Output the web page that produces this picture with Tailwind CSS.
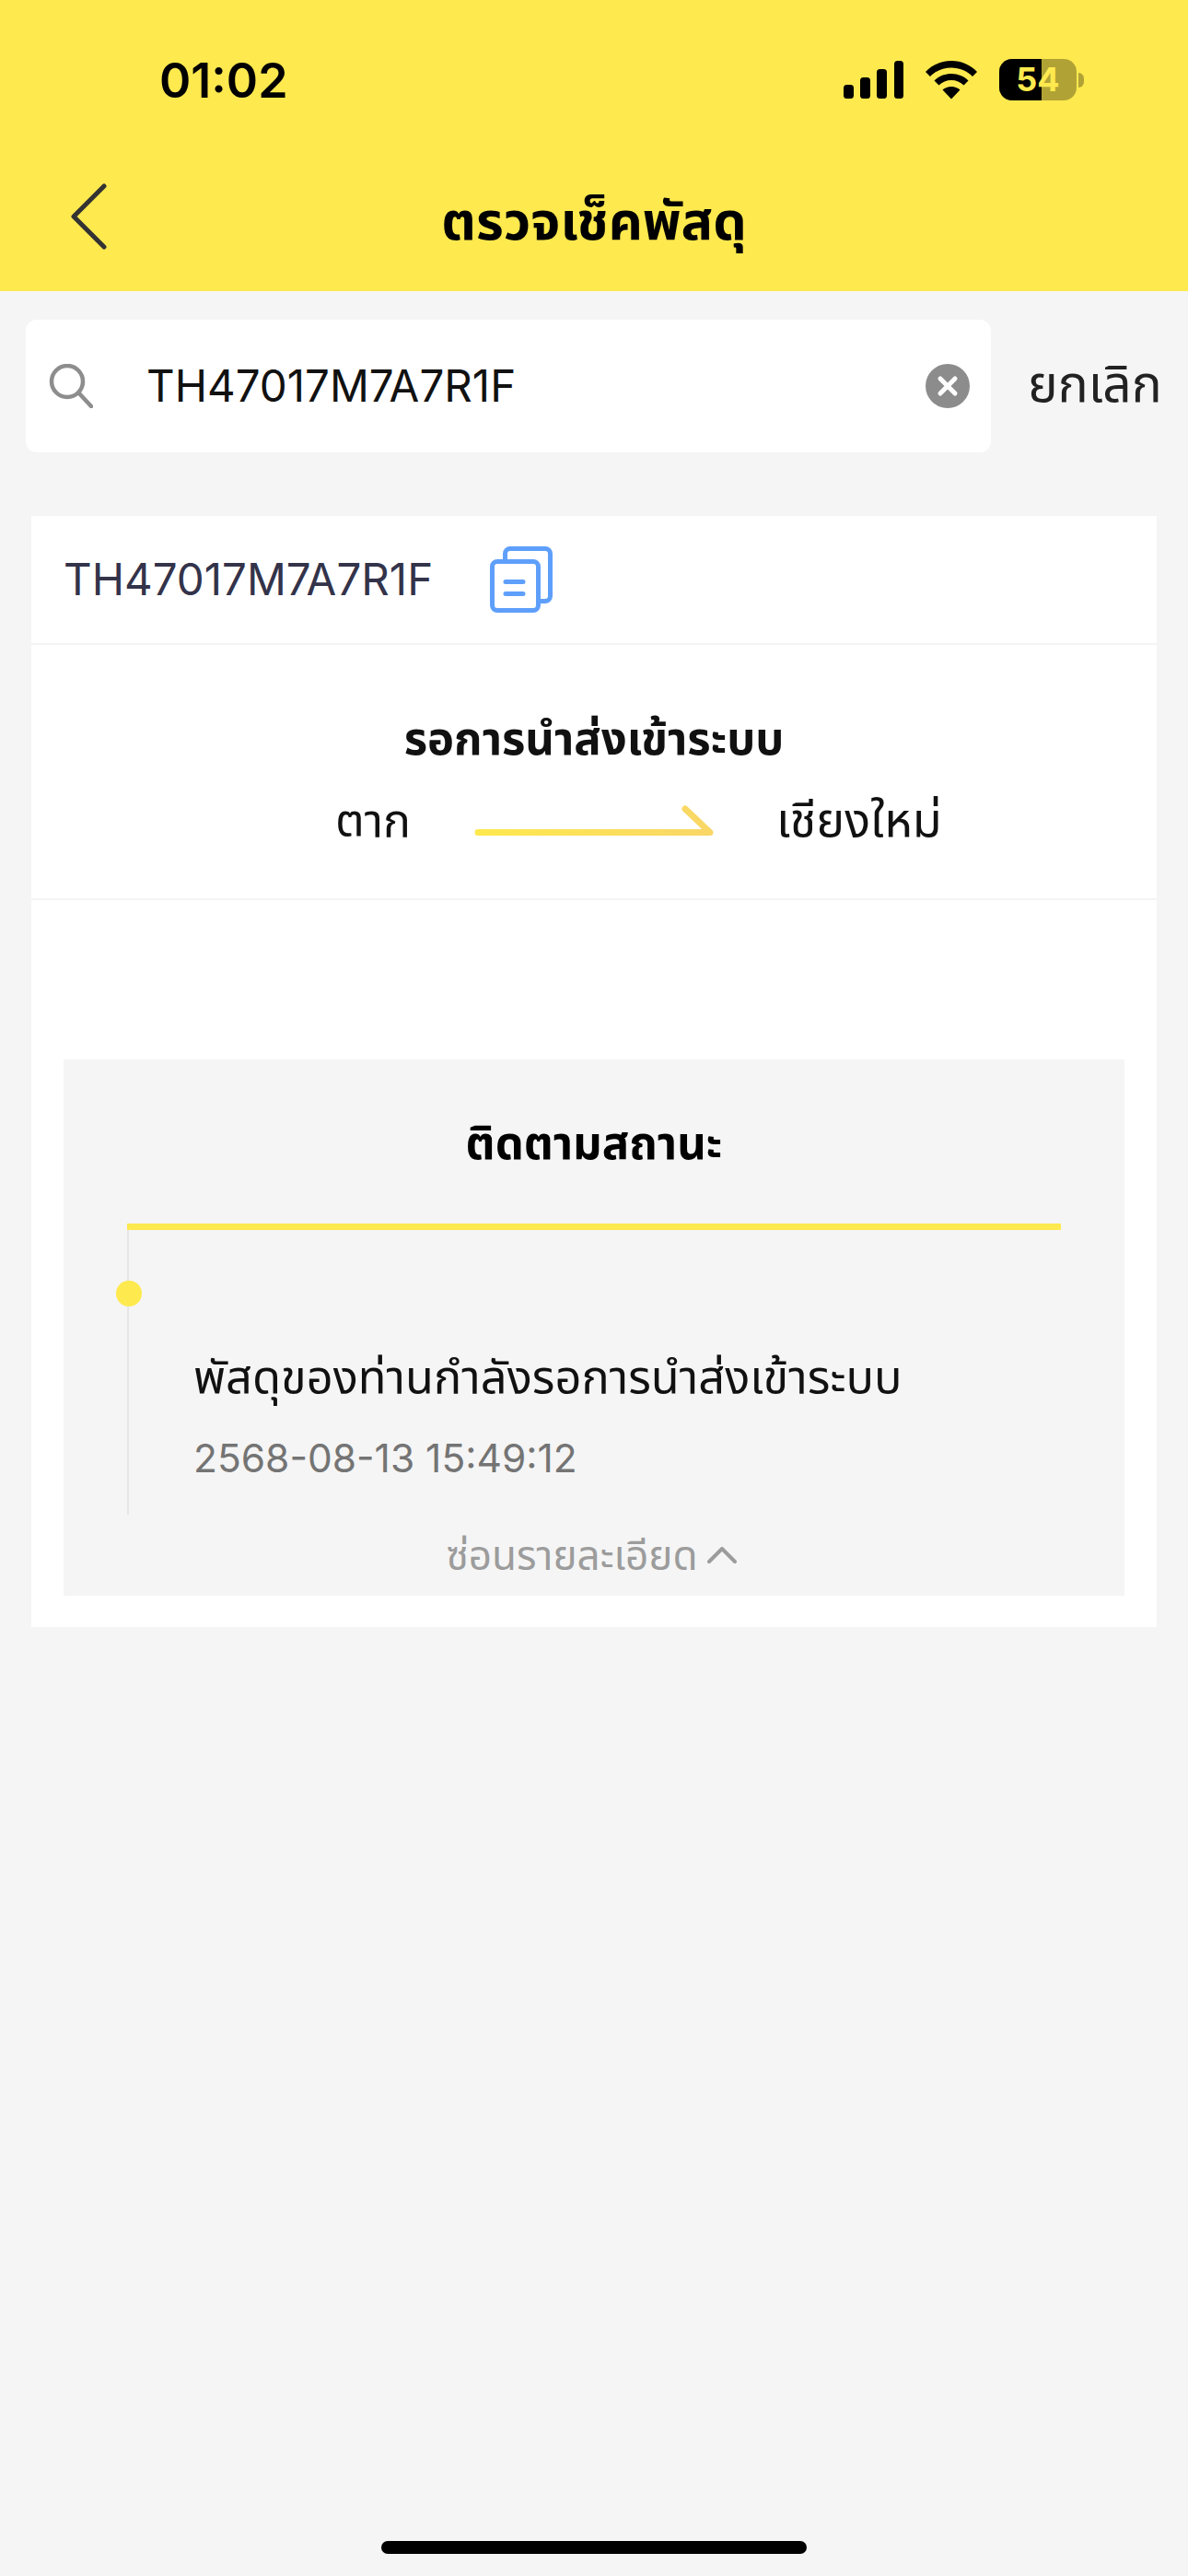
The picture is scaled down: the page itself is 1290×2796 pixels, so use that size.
<!DOCTYPE html>
<html lang="th">
<head>
    <meta charset="UTF-8">
    <title>ตรวจเช็คพัสดุ</title>
    <script src="https://cdn.jsdelivr.net/npm/@tailwindcss/browser@4"></script>
</head>
<body class="bg-[#f5f5f5] font-['Inter','Noto_Sans','Noto_Sans_Thai',sans-serif]">
<div class="w-[1290px] h-[2796px] flex flex-col">
    <!-- yellow header -->
    <header class="h-[316px] bg-[#fee94e] flex flex-col shrink-0">
        <div class="h-[176px] flex pt-[60px] items-start">
            <div class="w-[173px] shrink-0"></div>
            <span class="text-[52px] leading-[56px] font-semibold text-black font-['Inter',sans-serif]">01:02</span>
            <div class="flex-1"></div>
            <svg width="65" height="41" viewBox="0 0 65 41" class="mt-[6px]">
                <rect x="0" y="26" width="11" height="15" rx="3.5"/>
                <rect x="18" y="18" width="11" height="23" rx="3.5"/>
                <rect x="36" y="9" width="11" height="32" rx="3.5"/>
                <rect x="55" y="0" width="10" height="41" rx="3.5"/>
            </svg>
            <svg width="58" height="42" viewBox="0 0 58 42" class="ml-[23px] mt-[6px]">
                <path d="M29 0C18 0 8 4.500 1 12L6 17C12 11 20 7.500 29 7.500S46 11 52 17L57 12C50 4.500 40 0 29 0Z"/>
                <path d="M29 14C22 14 15 16.800 10.500 21.500L15.500 26.500C19 23 24 21 29 21S39 23 42.500 26.500L47.500 21.500C43 16.800 36 14 29 14Z"/>
                <path d="M29 28C25.500 28 22 29.400 19.500 31.500L29 41.500L38.500 31.500C36 29.400 32.500 28 29 28Z"/>
            </svg>
            <div class="ml-[23px] mt-[4px] flex items-center">
                <div class="relative w-[84px] h-[45px] rounded-[14px] overflow-hidden bg-black/30 flex items-center justify-center">
                    <div class="absolute left-0 top-0 h-full w-[46px] bg-black"></div>
                    <span class="relative text-[#fee94e] text-[36px] leading-[45px] font-bold font-['Inter',sans-serif]">54</span>
                </div>
                <div class="ml-[2px] w-[6px] h-[16px] rounded-r-full bg-black/30"></div>
            </div>
            <div class="w-[113px] shrink-0"></div>
        </div>
        <div class="flex-1 relative flex items-center justify-center pb-[15px]">
            <svg width="40" height="72" viewBox="0 0 40 72" fill="none" stroke="#333" stroke-width="5" stroke-linecap="round" stroke-linejoin="round" class="absolute left-[77px] top-[23px]">
                <path d="M36 3 3 36 36 69"/>
            </svg>
            <span class="text-[57.500px] leading-[70px] font-bold text-black">ตรวจเช็คพัสดุ</span>
        </div>
    </header>

    <!-- search row -->
    <div class="flex items-center pl-[28px] mt-[31px] h-[144px] shrink-0">
        <div class="w-[1048px] h-[144px] bg-white rounded-[12px] flex items-center pl-[25px] pr-[23px]">
            <svg width="48" height="48" viewBox="0 0 48 48" fill="none" stroke="#8d8d8d" stroke-width="4.500" stroke-linecap="round">
                <circle cx="20" cy="19" r="17"/>
                <path d="M33 32 46 46"/>
            </svg>
            <span class="ml-[58px] text-[47.500px] leading-[60px] text-[#111] flex-1">TH47017M7A7R1F</span>
            <svg width="48" height="48" viewBox="0 0 48 48">
                <circle cx="24" cy="24" r="24" fill="#8c8c8c"/>
                <path d="M16 16 32 32M32 16 16 32" stroke="#fff" stroke-width="5" stroke-linecap="round"/>
            </svg>
        </div>
        <span class="ml-[40px] mb-[6px] text-[55px] leading-[60px] text-[#222]">ยกเลิก</span>
    </div>

    <!-- parcel card -->
    <div class="mt-[69px] mx-[34px] h-[1206px] bg-white flex flex-col shrink-0">
        <div class="h-[140px] border-b-2 border-[#f4f4f4] flex items-center pl-[35px] shrink-0">
            <span class="text-[47.500px] leading-[60px] text-[#33334a]">TH47017M7A7R1F</span>
            <svg width="68" height="72" viewBox="0 0 68 72" fill="none" stroke="#5e9ffb" stroke-width="5" stroke-linecap="round" stroke-linejoin="round" class="ml-[62px]">
                <path d="M16.500 15V8A5.500 5.500 0 0 1 22 2.500H60A5.500 5.500 0 0 1 65.500 8V54A5.500 5.500 0 0 1 60 59.500H53"/>
                <rect x="2.500" y="16.500" width="50" height="53" rx="5.500"/>
                <path d="M17 38.500H36M17 51.500H36"/>
            </svg>
        </div>
        <div class="h-[277px] border-b-2 border-[#f4f4f4] flex flex-col items-center pt-[72px] shrink-0">
            <span class="text-[49px] leading-[60px] font-bold text-[#111]">รอการนำส่งเข้าระบบ</span>
            <div class="self-start ml-[330px] flex items-center mt-[30px] h-[56px]">
                <span class="w-[80px] text-[50px] leading-[56px] text-[#111] whitespace-nowrap">ตาก</span>
                <svg width="262" height="34" viewBox="0 0 262 34" fill="none" stroke-width="7" stroke-linecap="round" stroke-linejoin="round" class="ml-[71px] mr-[66px] mt-[2px]">
                    <defs>
                        <linearGradient id="arrowFill" gradientUnits="userSpaceOnUse" x1="0" y1="0" x2="262" y2="0">
                            <stop offset="0" stop-color="#fee94e"/>
                            <stop offset="1" stop-color="#f9d667"/>
                        </linearGradient>
                    </defs>
                    <path d="M4 29.500H256L229 4" stroke="url(#arrowFill)"/>
                </svg>
                <span class="text-[52px] leading-[56px] text-[#111] whitespace-nowrap">เชียงใหม่</span>
            </div>
        </div>

        <!-- tracking panel -->
        <div class="mt-[173px] mx-[35px] h-[582px] bg-[#f5f5f5] flex flex-col shrink-0">
            <div class="h-[178px] flex items-center justify-center shrink-0 pt-[4px]">
                <span class="text-[49px] leading-[60px] font-bold text-black">ติดตามสถานะ</span>
            </div>
            <div class="h-[7px] mx-[69px] bg-[#fee94e] shrink-0"></div>
            <div class="relative ml-[69px] mr-[69px] h-[309px] border-l-2 border-[#e6e6e6] pl-[70px] pt-[130px] shrink-0">
                <div class="absolute left-[-14px] top-[55px] w-[28px] h-[28px] rounded-full bg-[#fee94e]"></div>
                <div class="text-[50.500px] leading-[60px] text-[#111] whitespace-nowrap">พัสดุของท่านกำลังรอการนำส่งเข้าระบบ</div>
                <div class="mt-[33px] text-[42.500px] leading-[50px] text-[#747474]">2568-08-13 15:49:12</div>
            </div>
            <div class="flex-1 flex items-center justify-center pr-[6px]">
                <span class="text-[44px] leading-[50px] text-[#9c9c9c]">ซ่อนรายละเอียด</span>
                <svg width="32" height="18" viewBox="0 0 32 18" fill="none" stroke="#9c9c9c" stroke-width="4" stroke-linecap="round" stroke-linejoin="round" class="ml-[10px]">
                    <path d="M2 16 16 2 30 16"/>
                </svg>
            </div>
        </div>
    </div>

    <!-- home indicator -->
    <div class="flex-1 flex items-end justify-center pb-[24px]">
        <div class="w-[462px] h-[14px] rounded-full bg-black"></div>
    </div>
</div>
</body>
</html>
